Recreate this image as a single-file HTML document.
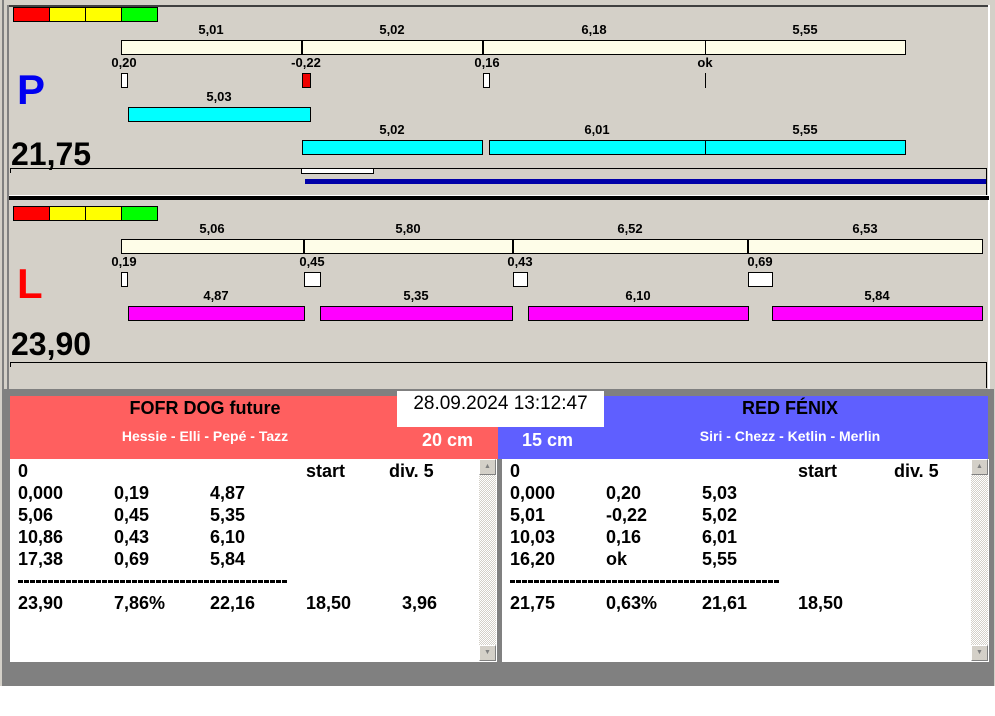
<!DOCTYPE html>
<html><head><meta charset="utf-8"><style>
*{margin:0;padding:0;box-sizing:border-box}
body{width:995px;height:716px;background:#fff;position:relative;overflow:hidden;font-family:"Liberation Sans",Arial,sans-serif}
.a{position:absolute}
.l{position:absolute;font-size:13px;font-weight:bold;color:#000;transform:translateX(-50%);white-space:nowrap;line-height:14px}
.b{position:absolute;border:1px solid #000}
.t{position:absolute;font-size:18px;font-weight:bold;line-height:22px;white-space:nowrap}
.sb{position:absolute;width:17px;background:repeating-conic-gradient(#d4d0c8 0 25%,#fff 0 50%) 0 0/2px 2px}
.arr{position:absolute;left:0;width:17px;height:16px;background:#d4d0c8;border:1px solid;border-color:#fff #808080 #808080 #fff;font-size:7px;color:#808080;text-align:center;line-height:14px}
.d{position:absolute;height:3px;width:270px;background:repeating-linear-gradient(90deg,#000 0 5px,transparent 5px 6px)}
</style></head><body>
<div class="a" style="left:0;top:0;width:995px;height:686px;background:#d4d0c8"></div>
<div class="a" style="left:2px;top:0;width:2px;height:686px;background:#808080"></div>
<div class="a" style="left:7px;top:5px;width:2px;height:385px;background:#808080"></div>
<div class="a" style="left:9px;top:5px;width:980px;height:2px;background:#404040"></div>
<div class="a" style="left:988px;top:5px;width:2px;height:385px;background:#fff"></div>

<div class="a" style="left:13px;top:7px;width:145px;height:15px;border:1px solid #000;display:flex">
<div style="flex:1;background:#f00;border-right:1px solid #000"></div><div style="flex:1;background:#ff0;border-right:1px solid #000"></div><div style="flex:1;background:#ff0;border-right:1px solid #000"></div><div style="flex:1;background:#0f0"></div></div>
<div class="l" style="left:211px;top:23px">5,01</div>
<div class="l" style="left:392px;top:23px">5,02</div>
<div class="l" style="left:594px;top:23px">6,18</div>
<div class="l" style="left:805px;top:23px">5,55</div>
<div class="b" style="left:121px;top:40px;width:785px;height:15px;background:#fefde8"></div>
<div class="a" style="left:301px;top:40px;width:2px;height:15px;background:#000"></div>
<div class="a" style="left:482px;top:40px;width:2px;height:15px;background:#000"></div>
<div class="a" style="left:705px;top:40px;width:1px;height:15px;background:#000"></div>
<div class="l" style="left:124px;top:56px">0,20</div>
<div class="l" style="left:306px;top:56px">-0,22</div>
<div class="l" style="left:487px;top:56px">0,16</div>
<div class="l" style="left:705px;top:56px">ok</div>
<div class="b" style="left:121px;top:73px;width:7px;height:15px;background:#fff"></div>
<div class="b" style="left:302px;top:73px;width:9px;height:15px;background:#e00"></div>
<div class="b" style="left:483px;top:73px;width:7px;height:15px;background:#fff"></div>
<div class="a" style="left:705px;top:73px;width:1px;height:15px;background:#000"></div>
<div class="a" style="left:17px;top:66px;font-size:42px;font-weight:bold;color:#0000f0;line-height:48px">P</div>
<div class="l" style="left:219px;top:90px">5,03</div>
<div class="b" style="left:128px;top:107px;width:183px;height:15px;background:#0ff"></div>
<div class="l" style="left:392px;top:123px">5,02</div>
<div class="l" style="left:597px;top:123px">6,01</div>
<div class="l" style="left:805px;top:123px">5,55</div>
<div class="b" style="left:302px;top:140px;width:181px;height:15px;background:#0ff"></div>
<div class="b" style="left:489px;top:140px;width:417px;height:15px;background:#0ff"></div>
<div class="a" style="left:705px;top:140px;width:1px;height:15px;background:#000"></div>
<div class="a" style="left:11px;top:136px;font-size:32px;font-weight:bold;line-height:36px">21,75</div>
<div class="a" style="left:10px;top:168px;width:977px;height:1px;background:#000"></div>
<div class="a" style="left:10px;top:168px;width:1px;height:5px;background:#000"></div>
<div class="a" style="left:986px;top:168px;width:1px;height:27px;background:#000"></div>
<div class="b" style="left:301px;top:168px;width:73px;height:6px;background:#fff"></div>
<div class="a" style="left:305px;top:179px;width:681px;height:5px;background:#0000a8"></div>
<div class="a" style="left:9px;top:195px;width:980px;height:1px;background:#fff"></div>
<div class="a" style="left:9px;top:196px;width:980px;height:4px;background:#000"></div>

<div class="a" style="left:13px;top:206px;width:145px;height:15px;border:1px solid #000;display:flex">
<div style="flex:1;background:#f00;border-right:1px solid #000"></div><div style="flex:1;background:#ff0;border-right:1px solid #000"></div><div style="flex:1;background:#ff0;border-right:1px solid #000"></div><div style="flex:1;background:#0f0"></div></div>
<div class="l" style="left:212px;top:222px">5,06</div>
<div class="l" style="left:408px;top:222px">5,80</div>
<div class="l" style="left:630px;top:222px">6,52</div>
<div class="l" style="left:865px;top:222px">6,53</div>
<div class="b" style="left:121px;top:239px;width:862px;height:15px;background:#fefde8"></div>
<div class="a" style="left:303px;top:239px;width:2px;height:15px;background:#000"></div>
<div class="a" style="left:512px;top:239px;width:2px;height:15px;background:#000"></div>
<div class="a" style="left:747px;top:239px;width:2px;height:15px;background:#000"></div>
<div class="l" style="left:124px;top:255px">0,19</div>
<div class="l" style="left:312px;top:255px">0,45</div>
<div class="l" style="left:520px;top:255px">0,43</div>
<div class="l" style="left:760px;top:255px">0,69</div>
<div class="b" style="left:121px;top:272px;width:7px;height:15px;background:#fff"></div>
<div class="b" style="left:304px;top:272px;width:17px;height:15px;background:#fff"></div>
<div class="b" style="left:513px;top:272px;width:15px;height:15px;background:#fff"></div>
<div class="b" style="left:748px;top:272px;width:25px;height:15px;background:#fff"></div>
<div class="a" style="left:17px;top:260px;font-size:42px;font-weight:bold;color:#f00;line-height:48px">L</div>
<div class="l" style="left:216px;top:289px">4,87</div>
<div class="l" style="left:416px;top:289px">5,35</div>
<div class="l" style="left:638px;top:289px">6,10</div>
<div class="l" style="left:877px;top:289px">5,84</div>
<div class="b" style="left:128px;top:306px;width:177px;height:15px;background:#f0f"></div>
<div class="b" style="left:320px;top:306px;width:193px;height:15px;background:#f0f"></div>
<div class="b" style="left:528px;top:306px;width:221px;height:15px;background:#f0f"></div>
<div class="b" style="left:772px;top:306px;width:211px;height:15px;background:#f0f"></div>
<div class="a" style="left:11px;top:326px;font-size:32px;font-weight:bold;line-height:36px">23,90</div>
<div class="a" style="left:10px;top:362px;width:977px;height:1px;background:#000"></div>
<div class="a" style="left:10px;top:362px;width:1px;height:5px;background:#000"></div>
<div class="a" style="left:986px;top:362px;width:1px;height:26px;background:#000"></div>

<div class="a" style="left:4px;top:389px;width:990px;height:297px;background:#808080"></div>
<div class="a" style="left:10px;top:396px;width:488px;height:63px;background:#ff5f5f"></div>
<div class="a" style="left:498px;top:396px;width:490px;height:63px;background:#5f5fff"></div>
<div class="a" style="left:10px;top:397px;width:390px;text-align:center;font-size:18px;font-weight:bold;line-height:22px">FOFR DOG future</div>
<div class="a" style="left:10px;top:428px;width:390px;text-align:center;font-size:14px;font-weight:bold;color:#fff;line-height:17px">Hessie - Elli - Pepé - Tazz</div>
<div class="a" style="left:590px;top:397px;width:400px;text-align:center;font-size:18px;font-weight:bold;line-height:22px">RED FÉNIX</div>
<div class="a" style="left:590px;top:428px;width:400px;text-align:center;font-size:14px;font-weight:bold;color:#fff;line-height:17px">Siri - Chezz - Ketlin - Merlin</div>
<div class="a" style="left:397px;top:391px;width:207px;height:36px;background:#fff;font-size:19px;line-height:26px;text-align:center">28.09.2024 13:12:47</div>
<div class="a" style="left:422px;top:429px;font-size:18px;font-weight:bold;color:#fff;line-height:22px">20 cm</div>
<div class="a" style="left:522px;top:429px;font-size:18px;font-weight:bold;color:#fff;line-height:22px">15 cm</div>

<div class="a" style="left:10px;top:459px;width:487px;height:203px;background:#fff"></div>
<div class="a" style="left:502px;top:459px;width:487px;height:203px;background:#fff"></div>
<div class="sb" style="left:479px;top:459px;height:202px"><div class="arr" style="top:0">▲</div><div class="arr" style="top:186px">▼</div></div>
<div class="sb" style="left:971px;top:459px;height:202px"><div class="arr" style="top:0">▲</div><div class="arr" style="top:186px">▼</div></div>

<div class="t" style="left:18px;top:460px">0</div><div class="t" style="left:306px;top:460px">start</div><div class="t" style="left:389px;top:460px">div. 5</div>
<div class="t" style="left:18px;top:482px">0,000</div><div class="t" style="left:114px;top:482px">0,19</div><div class="t" style="left:210px;top:482px">4,87</div>
<div class="t" style="left:18px;top:504px">5,06</div><div class="t" style="left:114px;top:504px">0,45</div><div class="t" style="left:210px;top:504px">5,35</div>
<div class="t" style="left:18px;top:526px">10,86</div><div class="t" style="left:114px;top:526px">0,43</div><div class="t" style="left:210px;top:526px">6,10</div>
<div class="t" style="left:18px;top:548px">17,38</div><div class="t" style="left:114px;top:548px">0,69</div><div class="t" style="left:210px;top:548px">5,84</div>
<div class="d" style="left:18px;top:580px"></div>
<div class="t" style="left:18px;top:592px">23,90</div><div class="t" style="left:114px;top:592px">7,86%</div><div class="t" style="left:210px;top:592px">22,16</div><div class="t" style="left:306px;top:592px">18,50</div><div class="t" style="left:402px;top:592px">3,96</div>

<div class="t" style="left:510px;top:460px">0</div><div class="t" style="left:798px;top:460px">start</div><div class="t" style="left:894px;top:460px">div. 5</div>
<div class="t" style="left:510px;top:482px">0,000</div><div class="t" style="left:606px;top:482px">0,20</div><div class="t" style="left:702px;top:482px">5,03</div>
<div class="t" style="left:510px;top:504px">5,01</div><div class="t" style="left:606px;top:504px">-0,22</div><div class="t" style="left:702px;top:504px">5,02</div>
<div class="t" style="left:510px;top:526px">10,03</div><div class="t" style="left:606px;top:526px">0,16</div><div class="t" style="left:702px;top:526px">6,01</div>
<div class="t" style="left:510px;top:548px">16,20</div><div class="t" style="left:606px;top:548px">ok</div><div class="t" style="left:702px;top:548px">5,55</div>
<div class="d" style="left:510px;top:580px"></div>
<div class="t" style="left:510px;top:592px">21,75</div><div class="t" style="left:606px;top:592px">0,63%</div><div class="t" style="left:702px;top:592px">21,61</div><div class="t" style="left:798px;top:592px">18,50</div>
</body></html>
